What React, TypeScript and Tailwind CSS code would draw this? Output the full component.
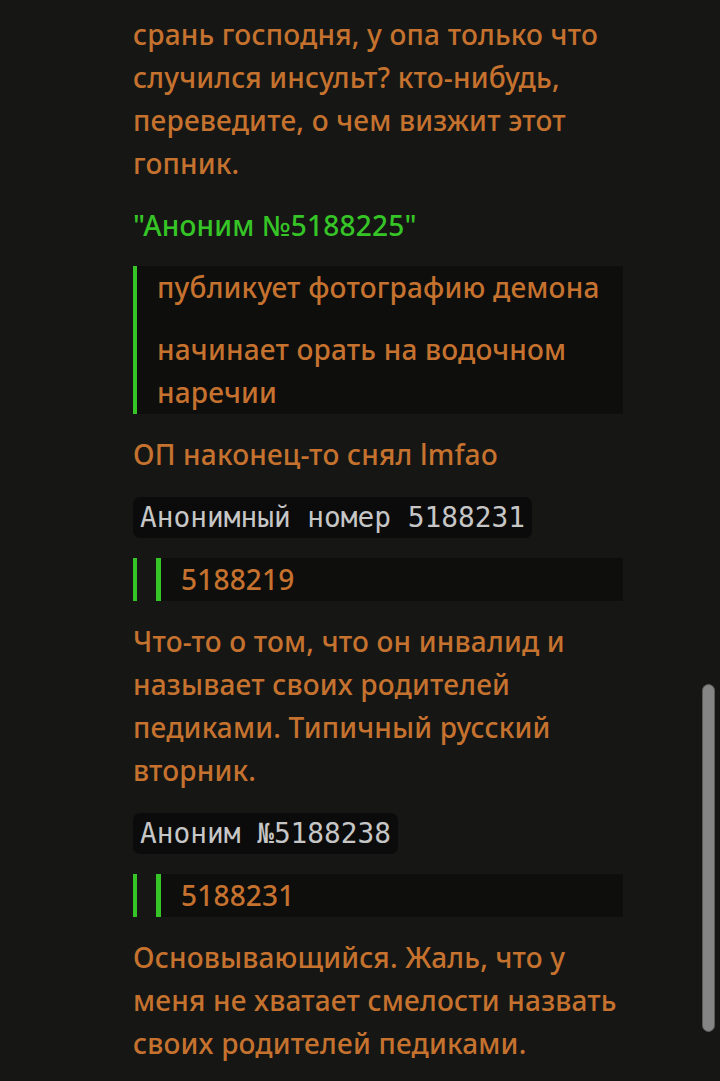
const body = "font-['Noto_Sans','Open_Sans',sans-serif] font-medium text-[28px] leading-[43px] tracking-[0.2px] text-[#c6722f]";

const Code = ({ children }: { children: string }) => (
  <code className="whitespace-pre rounded-[7px] bg-[#0b0b0b] px-[7px] py-[4px] font-['DejaVu_Sans_Mono',monospace] font-normal text-[27.8px] tracking-normal text-[#c6c6c6]">
    {children}
  </code>
);

const Quote = ({ children }: { children: React.ReactNode }) => (
  <blockquote className="flex flex-col gap-[19px] border-l-4 border-[#36c526] bg-[#0e0e0d] pl-[20px]">
    {children}
  </blockquote>
);

const NestedQuote = ({ num }: { num: string }) => (
  <blockquote className="border-l-4 border-[#36c526] pl-[19px]">
    <blockquote className="border-l-[5px] border-[#36c526] bg-[#0e0e0d] pl-[20px]">
      <p>{num}</p>
    </blockquote>
  </blockquote>
);

export default function App() {
  return (
    <div className="relative min-h-[1081px] overflow-hidden bg-[#161715]">
      <div className={`ml-[133px] flex w-[490px] flex-col gap-[19px] pt-[13px] ${body}`}>
        <p>срань господня, у опа только что случился инсульт? кто-нибудь, переведите, о чем визжит этот гопник.</p>
        <p className="text-[#36c526]">"Аноним №5188225"</p>
        <Quote>
          <p>публикует фотографию демона</p>
          <p>начинает орать на водочном наречии</p>
        </Quote>
        <p>ОП наконец-то снял lmfao</p>
        <p>
          <Code>Анонимный номер 5188231</Code>
        </p>
        <NestedQuote num="5188219" />
        <p>Что-то о том, что он инвалид и называет своих родителей педиками. Типичный русский вторник.</p>
        <p>
          <Code>Аноним №5188238</Code>
        </p>
        <NestedQuote num="5188231" />
        <p>Основывающийся. Жаль, что у меня не хватает смелости назвать своих родителей педиками.</p>
      </div>
      <div className="absolute left-[702px] top-[684px] h-[348px] w-[13px] rounded-full border border-[#5a5b59] bg-[#858585]" />
    </div>
  );
}
